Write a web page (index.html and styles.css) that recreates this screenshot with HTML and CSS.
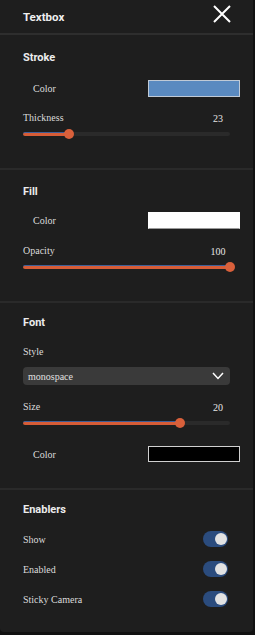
FILE: index.html
```html
<!DOCTYPE html>
<html lang="en">
<head>
    <meta charset="UTF-8">
    <meta name="viewport" content="width=device-width, initial-scale=1.0">
    <title>Textbox</title>
    <link rel="stylesheet" href="styles.css">
</head>
<body>
    <div class="panel">
        <div class="header">
            <span class="title">Textbox</span>
            <svg class="close" width="18" height="18" viewBox="0 0 18 18">
                <path d="M1 1 L17 17 M17 1 L1 17" stroke="#fff" stroke-width="2" fill="none"/>
            </svg>
        </div>

        <div class="section stroke">
            <h3>Stroke</h3>
            <div class="color-row">
                <span class="label">Color</span>
                <span class="swatch blue"></span>
            </div>
            <div class="slider-head">
                <span class="label">Thickness</span>
                <span class="value">23</span>
            </div>
            <div class="slider">
                <div class="track">
                    <div class="fill" style="width: 22%"></div>
                    <div class="thumb" style="left: 22%"></div>
                </div>
            </div>
        </div>

        <div class="section fill-sec">
            <h3>Fill</h3>
            <div class="color-row">
                <span class="label">Color</span>
                <span class="swatch white"></span>
            </div>
            <div class="slider-head">
                <span class="label">Opacity</span>
                <span class="value">100</span>
            </div>
            <div class="slider">
                <div class="track">
                    <div class="fill" style="width: 100%"></div>
                    <div class="thumb" style="left: 100%"></div>
                </div>
            </div>
        </div>

        <div class="section font">
            <h3>Font</h3>
            <div class="field-label"><span class="label">Style</span></div>
            <div class="select">
                <span>monospace</span>
                <svg width="12" height="8" viewBox="0 0 12 8">
                    <path d="M1 1 L6 6.5 L11 1" stroke="#fff" stroke-width="1.5" fill="none"/>
                </svg>
            </div>
            <div class="slider-head size-head">
                <span class="label">Size</span>
                <span class="value">20</span>
            </div>
            <div class="slider">
                <div class="track">
                    <div class="fill" style="width: 75.8%"></div>
                    <div class="thumb" style="left: 75.8%"></div>
                </div>
            </div>
            <div class="color-row font-color">
                <span class="label">Color</span>
                <span class="swatch black"></span>
            </div>
        </div>

        <div class="section enablers">
            <h3>Enablers</h3>
            <div class="toggle-row">
                <span class="label">Show</span>
                <span class="toggle"><span class="knob"></span></span>
            </div>
            <div class="toggle-row">
                <span class="label">Enabled</span>
                <span class="toggle"><span class="knob"></span></span>
            </div>
            <div class="toggle-row">
                <span class="label">Sticky Camera</span>
                <span class="toggle"><span class="knob"></span></span>
            </div>
        </div>
    </div>
</body>
</html>
```

FILE: styles.css
```css
body {
    margin: 0;
    background: #111;
    font-family: 'Liberation Serif', 'Times New Roman', serif;
    color: #dcdcdc;
}
.panel {
    width: 253px;
    height: 632px;
    background: #1e1e1e;
    border-radius: 0 0 4px 4px;
    overflow: hidden;
}
.header {
    height: 35px;
    padding: 4px 23px 0 23px;
    box-sizing: border-box;
    display: flex;
    align-items: flex-start;
    justify-content: space-between;
    border-bottom: 2px solid #2e2e2e;
}
.title {
    margin-top: 2px;
    font-family: Roboto, 'Liberation Sans', sans-serif;
    font-weight: bold;
    font-size: 11.5px;
    line-height: 22px;
    color: #f0f0f0;
}
.close {
    margin-top: 1px;
    margin-right: -1px;
}
.section {
    padding: 14px 23px 0 23px;
    box-sizing: border-box;
    border-bottom: 2px solid #2a2a2a;
}
.section.stroke { height: 135px; }
.section.fill-sec { height: 133px; padding-top: 13px; }
.section.font { height: 187px; padding-top: 11px; }
.section.enablers { border-bottom: none; padding-top: 11px; }
h3 {
    margin: 0;
    height: 18px;
    line-height: 18px;
    font-family: Roboto, 'Liberation Sans', sans-serif;
    font-weight: bold;
    font-size: 11px;
    color: #ececec;
}
.label {
    font-size: 10px;
    color: #dcdcdc;
}
.color-row {
    margin-top: 10px;
    height: 22px;
    padding-left: 10px;
    margin-right: -10px;
    display: flex;
    align-items: center;
    justify-content: space-between;
}
.fill-sec .color-row { margin-top: 8px; }
.swatch {
    width: 92px;
    height: 17px;
    box-sizing: border-box;
    border: 1px solid #c0cad6;
}
.swatch.blue { background: #5a8ac0; }
.swatch.white { background: #fff; border-color: #fff #fff #9a9a9a #fff; }
.swatch.black { background: #000; border-color: #d0d0d0; height: 16px; }
.slider-head {
    margin-top: 9px;
    height: 18px;
    display: flex;
    align-items: center;
    justify-content: space-between;
}
.fill-sec .slider-head { margin-top: 10px; }
.value {
    width: 24px;
    text-align: center;
    font-size: 10px;
    padding-top: 3px;
    color: #e6e6e6;
}
.slider {
    height: 16px;
    display: flex;
    align-items: center;
}
.track {
    position: relative;
    width: 100%;
    height: 4px;
    border-radius: 2px;
    background: #2a2a2a;
}
.fill {
    height: 4px;
    box-sizing: border-box;
    border-top: 1px solid #3d5f98;
    border-radius: 2px;
    background: #d65c37;
}
.thumb {
    position: absolute;
    top: -3px;
    width: 10px;
    height: 10px;
    margin-left: -5px;
    border-radius: 50%;
    background: #d9603b;
}
.field-label {
    margin-top: 10px;
    height: 18px;
    display: flex;
    align-items: center;
}
.select {
    margin-top: 7px;
    height: 18px;
    padding: 0 6px 0 5px;
    border-radius: 4px;
    background: #3a3a3a;
    display: flex;
    align-items: center;
    justify-content: space-between;
    font-size: 10px;
    color: #e0e0e0;
}
.size-head {
    margin-top: 12px;
}
.font-color {
    margin-top: 12px;
}
.toggle-row {
    margin-top: 10px;
    height: 20px;
    display: flex;
    align-items: center;
    justify-content: space-between;
}
.toggle {
    width: 25px;
    height: 16px;
    margin-right: 2px;
    border-radius: 8px;
    background: #2b4c7e;
    display: flex;
    align-items: center;
    justify-content: flex-end;
    padding-right: 1px;
    box-sizing: border-box;
}
.knob {
    width: 12px;
    height: 12px;
    border-radius: 50%;
    background: #e2e2e2;
}
```
